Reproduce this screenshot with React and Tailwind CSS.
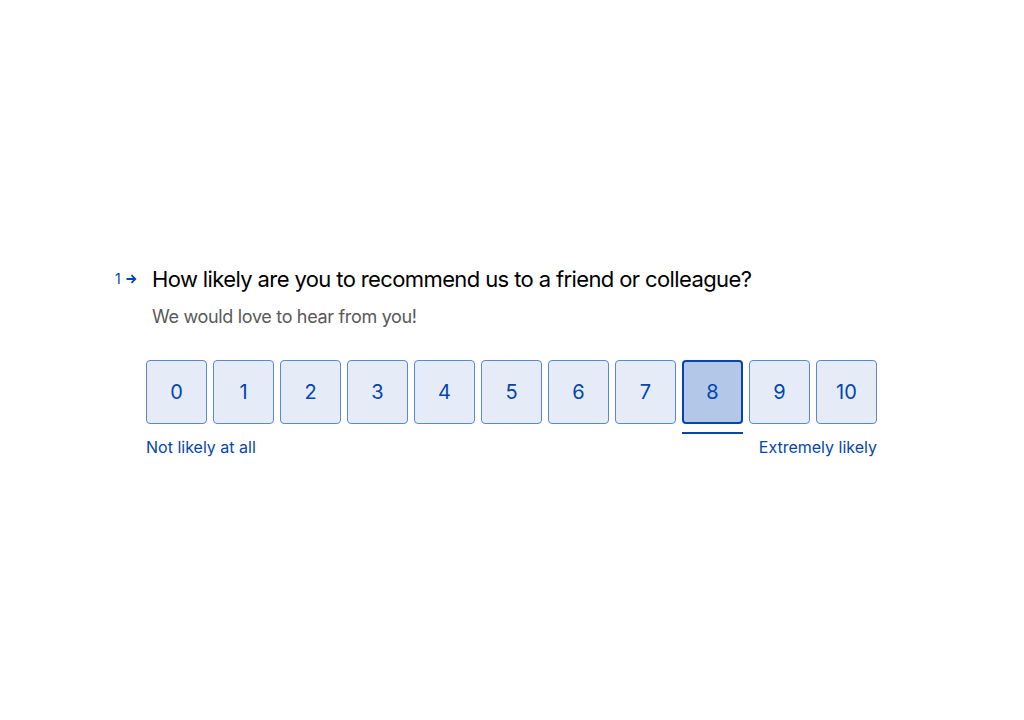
import React, { useState } from "react";

const scores = [0, 1, 2, 3, 4, 5, 6, 7, 8, 9, 10];

const App = () => {
    const [selected, setSelected] = useState(8);

    return (
        <div
            className="w-full h-screen bg-white flex items-center"
            style={{ fontFamily: "Inter, 'Noto Sans', sans-serif" }}
        >
            <div className="w-[794px] mx-auto pt-[3px]">
                {/* Question */}
                <div className="flex items-start">
                    <div className="w-[37px] flex items-center gap-[5px] pt-[5px] text-[#0445af]">
                        <span className="text-[14px] leading-[20px]">1</span>
                        <svg width="11" height="10" viewBox="0 0 11 10" fill="none">
                            <path d="M0.5 5h8.5M5.5 1.2L9.3 5L5.5 8.8" stroke="#0445af" strokeWidth="1.8" />
                        </svg>
                    </div>
                    <div>
                        <h1 className="text-[22px] leading-[30px] tracking-[-0.028em] text-black">
                            How likely are you to recommend us to a friend or colleague?
                        </h1>
                        <p className="mt-[10px] text-[18px] leading-[26px] tracking-[-0.018em] text-[#595959]">
                            We would love to hear from you!
                        </p>
                    </div>
                </div>

                {/* Scale */}
                <div className="pl-[31px] mt-[30px] w-[762px]">
                    <div className="flex gap-[6px]">
                        {scores.map((n) => (
                            <div key={n} className="flex flex-col items-center">
                                <button
                                    onClick={() => setSelected(n)}
                                    className={
                                        n === selected
                                            ? "w-[61px] h-[64px] rounded-[4px] border-2 border-[#0445af] bg-[#b3c7e8] text-[20px] text-[#0445af]"
                                            : "w-[61px] h-[64px] rounded-[4px] border border-[#5b87d6] bg-[#e6ecf7] text-[20px] text-[#0445af]"
                                    }
                                >
                                    {n}
                                </button>
                                <div
                                    className={
                                        n === selected
                                            ? "mt-[8px] w-[61px] h-[2px] bg-[#0445af]"
                                            : "mt-[8px] w-[61px] h-[2px] bg-transparent"
                                    }
                                />
                            </div>
                        ))}
                    </div>
                    <div className="flex justify-between mt-[1px] text-[16px] leading-[24px] text-[#0445af]">
                        <span>Not likely at all</span>
                        <span>Extremely likely</span>
                    </div>
                </div>
            </div>
        </div>
    );
};

export default App;
